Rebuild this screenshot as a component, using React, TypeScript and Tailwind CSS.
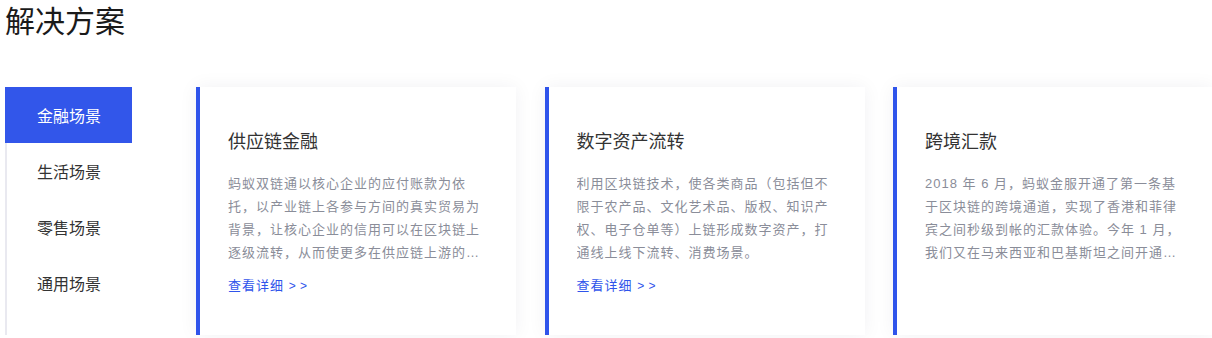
import { useState } from 'react';

interface Solution {
  title: string;
  desc: string;
  link?: boolean;
}

const tabs = ['金融场景', '生活场景', '零售场景', '通用场景'];

const solutions: Solution[] = [
  {
    title: '供应链金融',
    desc: '蚂蚁双链通以核心企业的应付账款为依托，以产业链上各参与方间的真实贸易为背景，让核心企业的信用可以在区块链上逐级流转，从而使更多在供应链上游的中小企业获得高效、低成本的普惠金融服务。',
    link: true,
  },
  {
    title: '数字资产流转',
    desc: '利用区块链技术，使各类商品（包括但不限于农产品、文化艺术品、版权、知识产权、电子仓单等）上链形成数字资产，打通线上线下流转、消费场景。',
    link: true,
  },
  {
    title: '跨境汇款',
    desc: '2018 年 6 月，蚂蚁金服开通了第一条基于区块链的跨境通道，实现了香港和菲律宾之间秒级到帐的汇款体验。今年 1 月，我们又在马来西亚和巴基斯坦之间开通了跨境汇款通道。',
  },
];

function SolutionCard({ item }: { item: Solution }) {
  return (
    <article className="w-[320px] shrink-0 bg-white border-l-4 border-[#2f54eb] pl-[28px] pr-[28px] pt-[40px] shadow-[0_0_18px_rgba(20,30,60,0.06)]">
      <h3 className="text-[18px] leading-[26px] text-[#333]">{item.title}</h3>
      <p className="mt-[19px] font-['Liberation_Sans','Noto_Sans_CJK_SC',sans-serif] text-[13px] leading-[23px] tracking-[1px] text-[#8a8d99] line-clamp-4">
        {item.desc}
      </p>
      {item.link && (
        <a className="mt-[12px] block font-['Liberation_Sans','Noto_Sans_CJK_SC',sans-serif] text-[13px] leading-[20px] tracking-[1px] text-[#2f54eb]">
          查看详细 <span className="text-[12px] tracking-[0.5px]">&gt; &gt;</span>
        </a>
      )}
    </article>
  );
}

export default function App() {
  const [active, setActive] = useState(0);

  return (
    <div className="w-full overflow-hidden bg-white pl-[5px] font-['Noto_Sans_CJK_SC','Noto_Sans',sans-serif]">
      <h2 className="pt-[1px] text-[30px] leading-[36px] text-[#1a1a1a]">解决方案</h2>

      <div className="mt-[50px] flex h-[248px] items-stretch">
        {/* 左侧场景切换 */}
        <ul className="w-[127px] shrink-0 border-l-2 border-[#e9e9f0]">
          {tabs.map((tab, i) => (
            <li
              key={tab}
              onClick={() => setActive(i)}
              className={[
                'flex h-[56px] cursor-pointer items-center pl-[30px] text-[16px]',
                active === i ? '-ml-[2px] pl-[32px] bg-[#3256ea] text-white' : 'text-[#333]',
              ].join(' ')}
            >
              {tab}
            </li>
          ))}
        </ul>

        {/* 方案卡片 */}
        <div className="ml-[64px] flex gap-[28.5px]">
          {solutions.map((item) => (
            <SolutionCard key={item.title} item={item} />
          ))}
        </div>
      </div>
      <div className="h-[10px]" />
    </div>
  );
}
